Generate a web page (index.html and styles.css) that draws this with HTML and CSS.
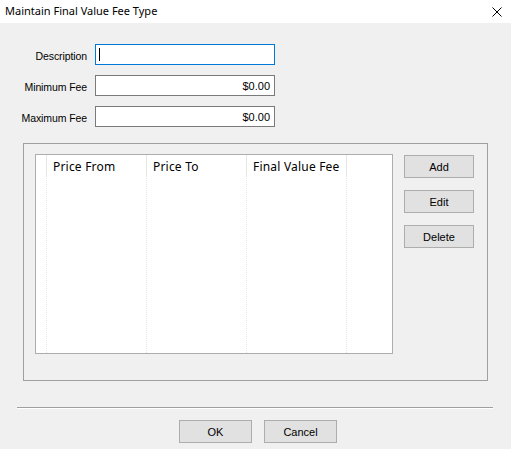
FILE: index.html
```html
<!DOCTYPE html>
<html>
<head>
<meta charset="utf-8">
<link rel="stylesheet" href="styles.css">
</head>
<body>
<div class="window">
  <div class="titlebar">
    <span class="title">Maintain Final Value Fee Type</span>
    <svg class="close" width="10" height="10" viewBox="0 0 10 10"><path d="M0.5 0.5 L9.5 9.5 M9.5 0.5 L0.5 9.5" stroke="#000" stroke-width="1" fill="none"/></svg>
  </div>
  <div class="form">
    <label class="lbl">Description</label>
    <div class="field focus"><span class="caret"></span></div>
    <label class="lbl">Minimum Fee</label>
    <div class="field num">$0.00</div>
    <label class="lbl">Maximum Fee</label>
    <div class="field num">$0.00</div>
  </div>
  <div class="group">
    <div class="list">
      <div class="col c0"><div class="hd"></div></div>
      <div class="col"><div class="hd">Price From</div></div>
      <div class="col"><div class="hd">Price To</div></div>
      <div class="col"><div class="hd">Final Value Fee</div></div>
      <div class="col rest"></div>
    </div>
    <div class="side">
      <button class="btn">Add</button>
      <button class="btn">Edit</button>
      <button class="btn">Delete</button>
    </div>
  </div>
  <div class="sep"></div>
  <div class="footer">
    <button class="btn wide">OK</button>
    <button class="btn wide">Cancel</button>
  </div>
</div>
</body>
</html>
```

FILE: styles.css
```css
html, body {
  margin: 0;
  padding: 0;
}
body {
  background: #f0f0f0;
  width: 511px;
  height: 449px;
  overflow: hidden;
  font-family: "Liberation Sans", Arial, sans-serif;
  font-size: 11px;
  color: #000;
}
.window {
  display: flex;
  flex-direction: column;
}
.titlebar {
  height: 23px;
  background: #fff;
  display: flex;
  align-items: center;
  justify-content: space-between;
  padding-left: 5px;
  padding-right: 9px;
}
.title {
  font-family: "Noto Sans", "Open Sans", sans-serif;
  font-size: 11px;
  color: #000;
  position: relative;
  top: -1px;
}
.close {
  display: block;
}
.form {
  margin-top: 21px;
  display: grid;
  grid-template-columns: 87px 180px;
  column-gap: 8px;
  row-gap: 10px;
  align-items: center;
}
.lbl {
  text-align: right;
  color: #000;
  font-size: 10.5px;
  letter-spacing: -0.1px;
  padding-top: 2px;
}
.field {
  height: 21px;
  box-sizing: border-box;
  border: 1px solid #7a7a7a;
  background: #fff;
  display: flex;
  align-items: center;
  padding: 0 4px;
}
.field.focus {
  border-color: #0078d7;
}
.caret {
  width: 1px;
  height: 13px;
  background: #000;
  margin-left: -1px;
}
.field.num {
  justify-content: flex-end;
  font-size: 11px;
}
.group {
  margin: 16px 0 0 23px;
  width: 465px;
  height: 238px;
  box-sizing: border-box;
  border: 1px solid #a0a0a0;
  display: flex;
  align-items: flex-start;
  padding: 10px 0 0 11px;
}
.list {
  width: 358px;
  height: 200px;
  box-sizing: border-box;
  border: 1px solid #adadad;
  background: #fff;
  display: flex;
  font-family: "Noto Sans", "Open Sans", sans-serif;
  font-size: 12px;
}
.col {
  width: 100px;
  height: 100%;
  box-sizing: border-box;
  border-right: 1px dotted #e6e6e6;
}
.col.c0 {
  width: 11px;
}
.col.rest {
  flex: 1;
  border-right: none;
}
.hd {
  height: 21px;
  box-sizing: border-box;
  padding: 3px 0 0 6px;
  margin-right: -1px;
  border-right: 1px solid #e5e5e5;
  line-height: 18px;
  white-space: nowrap;
  letter-spacing: 0.2px;
}
.side {
  margin-left: 11px;
  margin-top: 1px;
  display: flex;
  flex-direction: column;
  gap: 12px;
}
.btn {
  width: 70px;
  height: 23px;
  box-sizing: border-box;
  background: #e1e1e1;
  border: 1px solid #adadad;
  font-family: "Liberation Sans", Arial, sans-serif;
  font-size: 11px;
  color: #000;
  padding: 0;
  margin: 0;
}
.btn.wide {
  width: 73px;
}
.sep {
  margin: 26px 0 0 17px;
  width: 476px;
  height: 1px;
  background: #a0a0a0;
  border-bottom: 1px solid #fff;
}
.footer {
  margin-top: 11px;
  display: flex;
  gap: 12px;
  padding-left: 179px;
}
```
